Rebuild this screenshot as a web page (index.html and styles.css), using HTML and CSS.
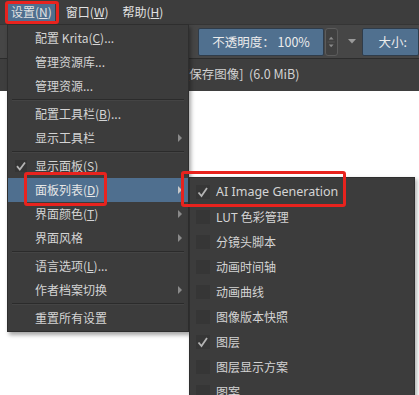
FILE: index.html
```html
<!DOCTYPE html>
<html lang="zh-CN">
<head>
<meta charset="utf-8">
<title>Krita 设置菜单</title>
<link rel="stylesheet" href="styles.css">
</head>
<body>
<div class="app">
  <div class="menubar">
    <span class="mb-item active">设置(<u>N</u>)</span>
    <span class="mb-item">窗口(<u>W</u>)</span>
    <span class="mb-item">帮助(<u>H</u>)</span>
  </div>
  <div class="toolbar">
    <div class="field opacity">不透明度：&nbsp;100%</div>
    <div class="spin">
      <svg width="13" height="28" viewBox="0 0 13 28"><path d="M3.5 11 L6.5 7.5 L9.5 11 Z" fill="#8a8a8a"/><line x1="2" y1="14" x2="11" y2="14" stroke="#5a5a5a"/><path d="M3.5 17 L6.5 20.5 L9.5 17 Z" fill="#8a8a8a"/></svg>
    </div>
    <div class="drop"><svg width="8" height="5" viewBox="0 0 8 5"><path d="M0 0 L8 0 L4 4.5 Z" fill="#9a9a9a"/></svg></div>
    <div class="field size">大小:</div>
  </div>
  <div class="docbar"><span class="doc-title">[保存图像]&nbsp;&nbsp;(6.0 MiB)</span></div>
  <div class="canvas"></div>
</div>

<div class="menu main-menu">
  <div class="item"><span class="label">配置 Krita(<u>C</u>)...</span></div>
  <div class="item"><span class="label">管理资源库...</span></div>
  <div class="item"><span class="label">管理资源...</span></div>
  <div class="sep"></div>
  <div class="item"><span class="label">配置工具栏(<u>B</u>)...</span></div>
  <div class="item"><span class="label">显示工具栏</span><span class="arrow"></span></div>
  <div class="sep"></div>
  <div class="item"><span class="check main-check"><svg width="12" height="12" viewBox="0 0 12 12"><path d="M2 6.2 L4.8 9.5 L10 2.5" fill="none" stroke="#b4b4b4" stroke-width="1.8"/></svg></span><span class="label">显示面板(<u>S</u>)</span></div>
  <div class="item hl"><span class="label">面板列表(<u>D</u>)</span><span class="arrow light"></span></div>
  <div class="item"><span class="label">界面颜色(<u>T</u>)</span><span class="arrow"></span></div>
  <div class="item"><span class="label">界面风格</span><span class="arrow"></span></div>
  <div class="sep"></div>
  <div class="item"><span class="label">语言选项(<u>L</u>)...</span></div>
  <div class="item"><span class="label">作者档案切换</span><span class="arrow"></span></div>
  <div class="sep"></div>
  <div class="item"><span class="label">重置所有设置</span></div>
</div>

<div class="menu sub-menu">
  <div class="sitem"><span class="box"><svg width="14" height="14" viewBox="0 0 14 14"><path d="M2.5 7.5 L5.5 11 L11 3" fill="none" stroke="#b4b4b4" stroke-width="1.8"/></svg></span><span class="label latin">AI Image Generation</span></div>
  <div class="sitem"><span class="box"></span><span class="label">LUT 色彩管理</span></div>
  <div class="sitem"><span class="box"></span><span class="label">分镜头脚本</span></div>
  <div class="sitem"><span class="box"></span><span class="label">动画时间轴</span></div>
  <div class="sitem"><span class="box"></span><span class="label">动画曲线</span></div>
  <div class="sitem"><span class="box"></span><span class="label">图像版本快照</span></div>
  <div class="sitem"><span class="box"><svg width="14" height="14" viewBox="0 0 14 14"><path d="M2.5 7.5 L5.5 11 L11 3" fill="none" stroke="#b4b4b4" stroke-width="1.8"/></svg></span><span class="label">图层</span></div>
  <div class="sitem"><span class="box"></span><span class="label">图层显示方案</span></div>
  <div class="sitem"><span class="box"></span><span class="label">图案</span></div>
</div>

<div class="mark mark-menu"></div>
<div class="mark mark-item"></div>
<div class="mark mark-sub"></div>
</body>
</html>
```

FILE: styles.css
```css
* { box-sizing: border-box; margin: 0; padding: 0; }
html, body { width: 419px; height: 395px; overflow: hidden; }
body {
  background: #ffffff;
  font-family: "Noto Sans CJK SC", "Noto Sans", sans-serif;
  font-size: 12px;
  color: #d4d4d4;
  position: relative;
}
u { text-decoration: underline; text-underline-offset: 1px; }

.app { display: flex; flex-direction: column; height: 395px; }

.menubar {
  height: 24px;
  background: #3d3d3d;
  display: flex;
  align-items: center;
  padding-left: 8px;
  gap: 8px;
}
.mb-item {
  height: 20px;
  padding: 0 3px;
  display: flex;
  align-items: center;
  color: #e2e2e2;
  line-height: 20px;
}
.mb-item.active { background: #4f6f8f; }

.toolbar {
  height: 35px;
  background: #464646;
  border-top: 1px solid #353535;
  border-bottom: 1px solid #2c2c2c;
  display: flex;
  align-items: center;
  padding-left: 198px;
}
.field {
  height: 28px;
  background: #50708f;
  border: 1px solid #2f3c4a;
  border-radius: 2px;
  display: flex;
  align-items: center;
  color: #ececec;
  font-size: 12.5px;
}
.opacity { width: 134px; justify-content: center; }
.spin {
  width: 13px;
  height: 28px;
  margin-left: 1px;
  border: 1px solid #5c5c5c;
  border-radius: 3px;
  background: #404040;
  display: flex;
  align-items: center;
  justify-content: center;
  overflow: hidden;
}
.drop { margin-left: 10px; width: 8px; display: flex; align-items: center; }
.size { width: 60px; margin-left: 6px; padding-left: 16px; }

.docbar {
  height: 32px;
  background: #3e3e3e;
  padding-left: 185px;
  padding-top: 7px;
  color: #d2d2d2;
  font-size: 12.5px;
  line-height: 16px;
  white-space: nowrap;
}
.canvas { flex: 1; background: #ffffff; }

.menu {
  position: absolute;
  background: #3c3c3c;
  border: 1px solid #2e2e2e;
}
.main-menu {
  left: 7px;
  top: 24px;
  width: 182px;
  padding: 1px 0;
  box-shadow: 2px 3px 4px rgba(0, 0, 0, 0.35);
}
.item {
  height: 24px;
  display: flex;
  align-items: center;
  padding-left: 27px;
  position: relative;
}
.item.hl { background: #4f6f8f; color: #e6e6e6; }
.label { white-space: nowrap; line-height: 16px; }
.sep { height: 2px; margin: 1px 4px 1px; background: #2b2b2b; border-bottom: 1px solid #444; }
.arrow {
  position: absolute;
  right: 6px;
  top: 8px;
  width: 0;
  height: 0;
  border-top: 4px solid transparent;
  border-bottom: 4px solid transparent;
  border-left: 4px solid #8a8a8a;
}
.arrow.light { border-left-color: #c8c8c8; }
.check {
  position: absolute;
  left: 7px;
  top: 6px;
  width: 12px;
  height: 12px;
  background: #353535;
  display: flex;
}

.sub-menu {
  left: 189px;
  top: 177px;
  width: 226px;
  height: 230px;
  padding-top: 1px;
  box-shadow: 2px 2px 4px rgba(0, 0, 0, 0.3);
}
.sitem {
  height: 25px;
  display: flex;
  align-items: center;
  padding-left: 6px;
  gap: 6px;
}
.box {
  width: 14px;
  height: 14px;
  background: #363636;
  display: flex;
}
.latin { font-family: "Noto Sans", "Noto Sans CJK SC", sans-serif; font-size: 12.5px; }

.mark {
  position: absolute;
  border: 3px solid #e8231e;
  border-radius: 3px;
}
.mark-menu { left: 5px; top: 1px; width: 54px; height: 23px; }
.mark-item { left: 24px; top: 172px; width: 83px; height: 34px; }
.mark-sub { left: 181px; top: 171px; width: 165px; height: 36px; }
```
